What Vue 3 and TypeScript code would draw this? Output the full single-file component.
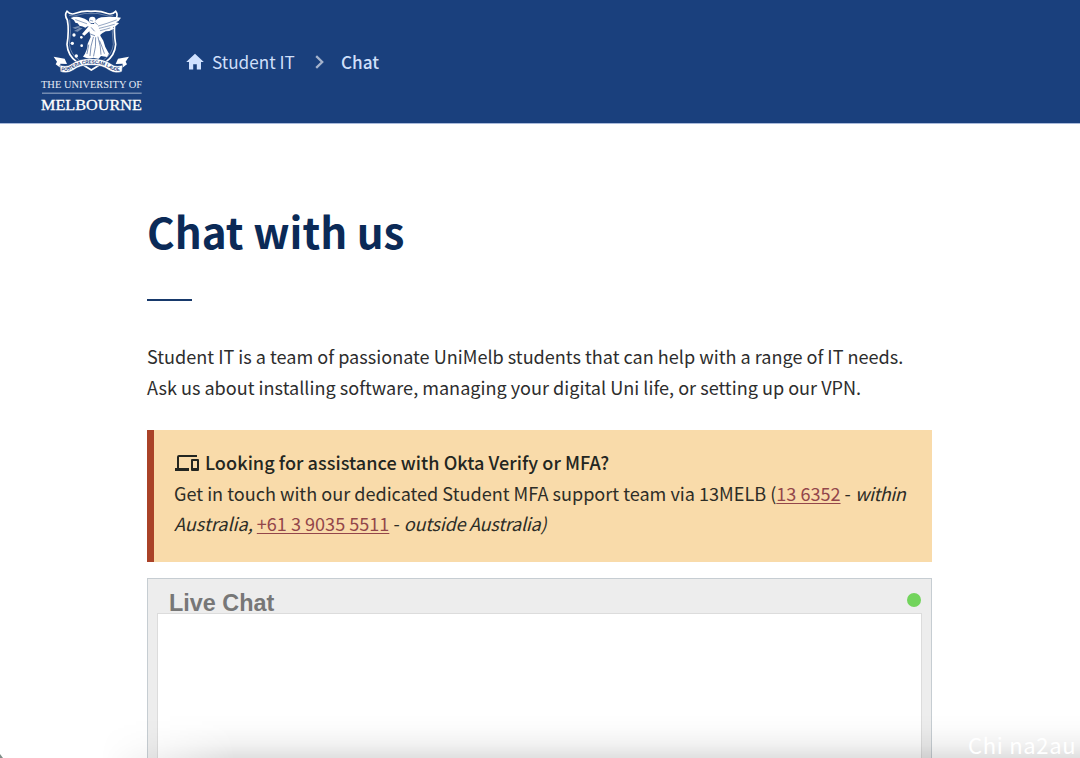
<script setup lang="ts">
const intro: string[] = [
  'Student IT is a team of passionate UniMelb students that can help with a range of IT needs.',
  'Ask us about installing software, managing your digital Uni life, or setting up our VPN.',
]
const stars: [number, number, number][] = [
  [132, 102, 5], [154, 109, 4], [127, 127, 5], [155, 134, 4], [139, 165, 5],
]
</script>

<template>
  <div class="page">
    <header class="header">
      <svg class="logo" viewBox="0 0 375 372" role="img" aria-label="The University of Melbourne">
        <g fill="none" stroke="#fff">
          <path d="M111 31Q121 43 137 37Q160 28 183 31Q208 28 230 37Q246 43 257 31Q266 42 256 57Q250 88 257 130Q255 164 226 184Q207 192 184 207Q161 192 142 184Q113 164 111 130Q118 88 112 57Q102 42 111 31Z" stroke-width="5" />
          <path d="M117 43Q131 48 145 42Q165 35 183 38Q203 35 222 42Q236 48 250 43M119 56Q124 90 118 130Q121 160 148 177M249 56Q244 90 250 130Q247 160 220 177" stroke-width="1.5" opacity=".7" />
        </g>
        <g fill="#fff">
          <circle v-for="(s, i) in stars" :key="i" :cx="s[0]" :cy="s[1]" :r="s[2]" />
          <path d="M181 75Q172 74 166 80Q156 74 149 75L143 67L136 65L132 58L122 51Q138 44 155 50Q174 55 184 70Z" />
          <path d="M127 80L145 75L152 78L136 84ZM132 90L149 80L158 82L143 92Z" opacity=".4" />
          <path d="M190 74Q194 53 214 49Q245 45 273 50Q268 60 258 64Q265 65 267 67Q259 76 248 79Q252 81 252 83Q240 91 227 91Q215 97 207 104Z" />
          <circle cx="187" cy="57" r="10" />
          <path d="M180 68L199 70L211 86L211 104L220 119Q224 139 237 158L231 168L213 165L205 175L190 170L178 174L159 167Q173 148 173 128L182 108L178 91L163 104L156 99L174 78Z" />
        </g>
        <g fill="none" stroke="#1a407d" stroke-linecap="round">
          <path d="M184 80L193 90M181 99L194 104M190 109Q181 135 180 164M197 110Q199 136 191 165M204 108Q213 138 213 160M176 132L171 158M209 120Q217 139 223 157" stroke-width="1.7" />
          <path d="M205 75Q230 68 259 57M208 82Q229 77 253 70M211 89Q228 85 240 81M170 68L137 56M181 58L188 60M196 65L202 70" stroke-width="1.4" />
        </g>
        <g fill="#fff">
          <path d="M71 167L104 173L111 189L91 188L93 202L77 190L81 182Z" />
          <path d="M297 167L264 173L257 189L278 188L275 202L291 190L287 182Z" />
        </g>
        <path d="M90 192Q111 199 125 188Q148 172 184 173Q220 172 243 188Q257 199 278 192L276 212Q255 220 237 208Q216 192 184 193Q151 192 130 208Q112 220 91 212Z" fill="#fff" stroke="#1a407d" stroke-width="1.5" />
        <path id="motto-curve" d="M94 209Q115 213 130 202Q151 188 184 188Q217 188 238 202Q252 213 275 209" fill="none" />
        <text class="motto"><textPath href="#motto-curve" textLength="184" lengthAdjust="spacingAndGlyphs">POSTERA CRESCAM LAUDE</textPath></text>
        <text class="name" x="33" y="260" font-size="28" textLength="303" lengthAdjust="spacingAndGlyphs">THE UNIVERSITY OF</text>
        <path d="M36 276.5H335" stroke="#d5ddea" stroke-width="2.2" />
        <text class="name uni" x="33" y="326" font-size="41" textLength="303" lengthAdjust="spacingAndGlyphs">MELBOURNE</text>
      </svg>
      <nav class="crumbs">
        <svg class="home" viewBox="0 0 18 17"><path d="M9 .7L.2 9H3V16.5H7.2V11.2H10.8V16.5H15V9H17.8Z" fill="#d0e1ff" /></svg>
        <span class="crumb">Student IT</span>
        <svg class="chevron" viewBox="0 0 9 14"><path d="M1.2 1.2L7.2 7L1.2 12.8" fill="none" stroke="#a5b3cc" stroke-width="2.3" /></svg>
        <span class="current">Chat</span>
      </nav>
    </header>

    <main class="content">
      <h1>Chat with us</h1>
      <div class="rule"></div>
      <p class="intro"><span v-for="line in intro" :key="line">{{ line }}</span></p>

      <section class="notice">
        <div class="notice-title">
          <svg class="devices" viewBox="0 0 24 16"><path d="M22 2V0H4Q2 0 2 2V13H0V16H14V13H4V2ZM23 4H17Q16 4 16 5V15Q16 16 17 16H23Q24 16 24 15V5Q24 4 23 4ZM22 13H18V6H22Z" fill="#232621" /></svg>
          <strong>Looking for assistance with Okta Verify or MFA?</strong>
        </div>
        <div>Get in touch with our dedicated Student MFA support team via 13MELB (<a>13 6352</a> - <em class="tight">within</em></div>
        <div><em>Australia,</em> <a>+61 3 9035 5511</a> - <em class="snug">outside Australia)</em></div>
      </section>

      <section class="chat">
        <div class="chat-head">
          <h2>Live Chat</h2>
          <i class="status"></i>
        </div>
        <div class="chat-body"></div>
      </section>
    </main>

    <div class="shade"></div>
    <div class="corner"></div>
    <div class="watermark">Chi na2au</div>
  </div>
</template>

<style>
body { margin: 0; }
</style>

<style scoped>
.page {
  position: relative;
  box-sizing: border-box;
  height: 758px;
  overflow: hidden;
  background: #fff;
  color: #2d2d2d;
  font: 400 18.08px/30.4px "Noto Sans CJK SC", "Noto Sans", sans-serif;
}
.header {
  box-sizing: border-box;
  display: flex;
  align-items: center;
  height: 124px;
  padding-left: 30px;
  background: #1a407d;
  border-bottom: 1px solid #a9badb;
}
.logo { width: 125px; height: 124px; flex: none; margin-top: 2px; }
.motto { font: 700 15px "Liberation Sans", sans-serif; fill: #1a407d; }
.name { font-family: "Liberation Serif", serif; fill: #e5ebf5; }
.uni { fill: #fff; stroke: #fff; stroke-width: .8; }
.crumbs {
  display: flex;
  align-items: center;
  padding-left: 31px;
  color: #cfdff9;
  font-size: 17.15px;
  line-height: 26px;
}
.home { width: 18px; height: 17px; }
.crumb { width: 84px; margin-left: 8px; white-space: nowrap; }
.chevron { width: 9px; height: 14px; margin: 0 17px 0 19px; }
.current { font-weight: 500; }
.content { width: 785px; margin-left: 147px; padding-top: 82px; }
h1 { margin: 0; color: #0b2a57; font-size: 42.2px; font-weight: 700; line-height: 50px; }
.rule { width: 45px; height: 2px; margin-top: 43px; background: #17396b; }
.intro { margin: 40.4px 0 0; }
.intro span { display: block; white-space: nowrap; }
.notice {
  box-sizing: border-box;
  height: 132px;
  margin-top: 27.4px;
  padding: 17px 0 0 20px;
  background: #f9dbaa;
  border-left: 7px solid #aa4228;
  color: #2d2d27;
  white-space: nowrap;
}
.notice-title { display: flex; align-items: center; height: 31px; color: #232621; }
.notice-title strong { font-weight: 500; letter-spacing: .04px; }
.devices { width: 24px; height: 16px; margin: 1px 6px 0 1px; }
a { color: #93464a; text-decoration: underline; text-decoration-thickness: 1px; text-underline-offset: 2px; }
.tight { letter-spacing: -.5px; }
.snug { letter-spacing: -.25px; }
.chat {
  box-sizing: border-box;
  height: 179.5px;
  margin-top: 16.6px;
  padding: 0 9px;
  background: #ededed;
  border: 1px solid #c6cdd2;
  border-bottom: 0;
}
.chat-head { display: flex; justify-content: space-between; height: 34px; padding: 0 1px 0 12px; }
h2 { margin: 10px 0 0; color: #777; font: 700 23.4px/28px "Liberation Sans", sans-serif; }
.status { width: 14px; height: 14px; margin-top: 14px; border-radius: 50%; background: #72d45c; }
.chat-body { height: 144px; background: #fff; border: 1px solid #dcdcdc; border-bottom: 0; }
.shade {
  position: absolute;
  inset: auto 0 0 0;
  height: 44px;
  background: linear-gradient(to bottom, transparent, rgba(0, 0, 0, .012) 30%, rgba(0, 0, 0, .05) 68%, rgba(0, 0, 0, .12));
  mask-image: linear-gradient(to right, transparent 100px, rgba(0, 0, 0, .35) 150px, #000 235px);
}
.corner { position: absolute; left: 0; bottom: 0; width: 3px; height: 4px; background: #7f8d88; clip-path: polygon(0 0, 100% 100%, 0 100%); }
.watermark {
  position: absolute;
  left: 968px;
  bottom: 0;
  color: #fff;
  font-size: 22px;
  line-height: 28px;
  letter-spacing: .7px;
  white-space: nowrap;
}
</style>
